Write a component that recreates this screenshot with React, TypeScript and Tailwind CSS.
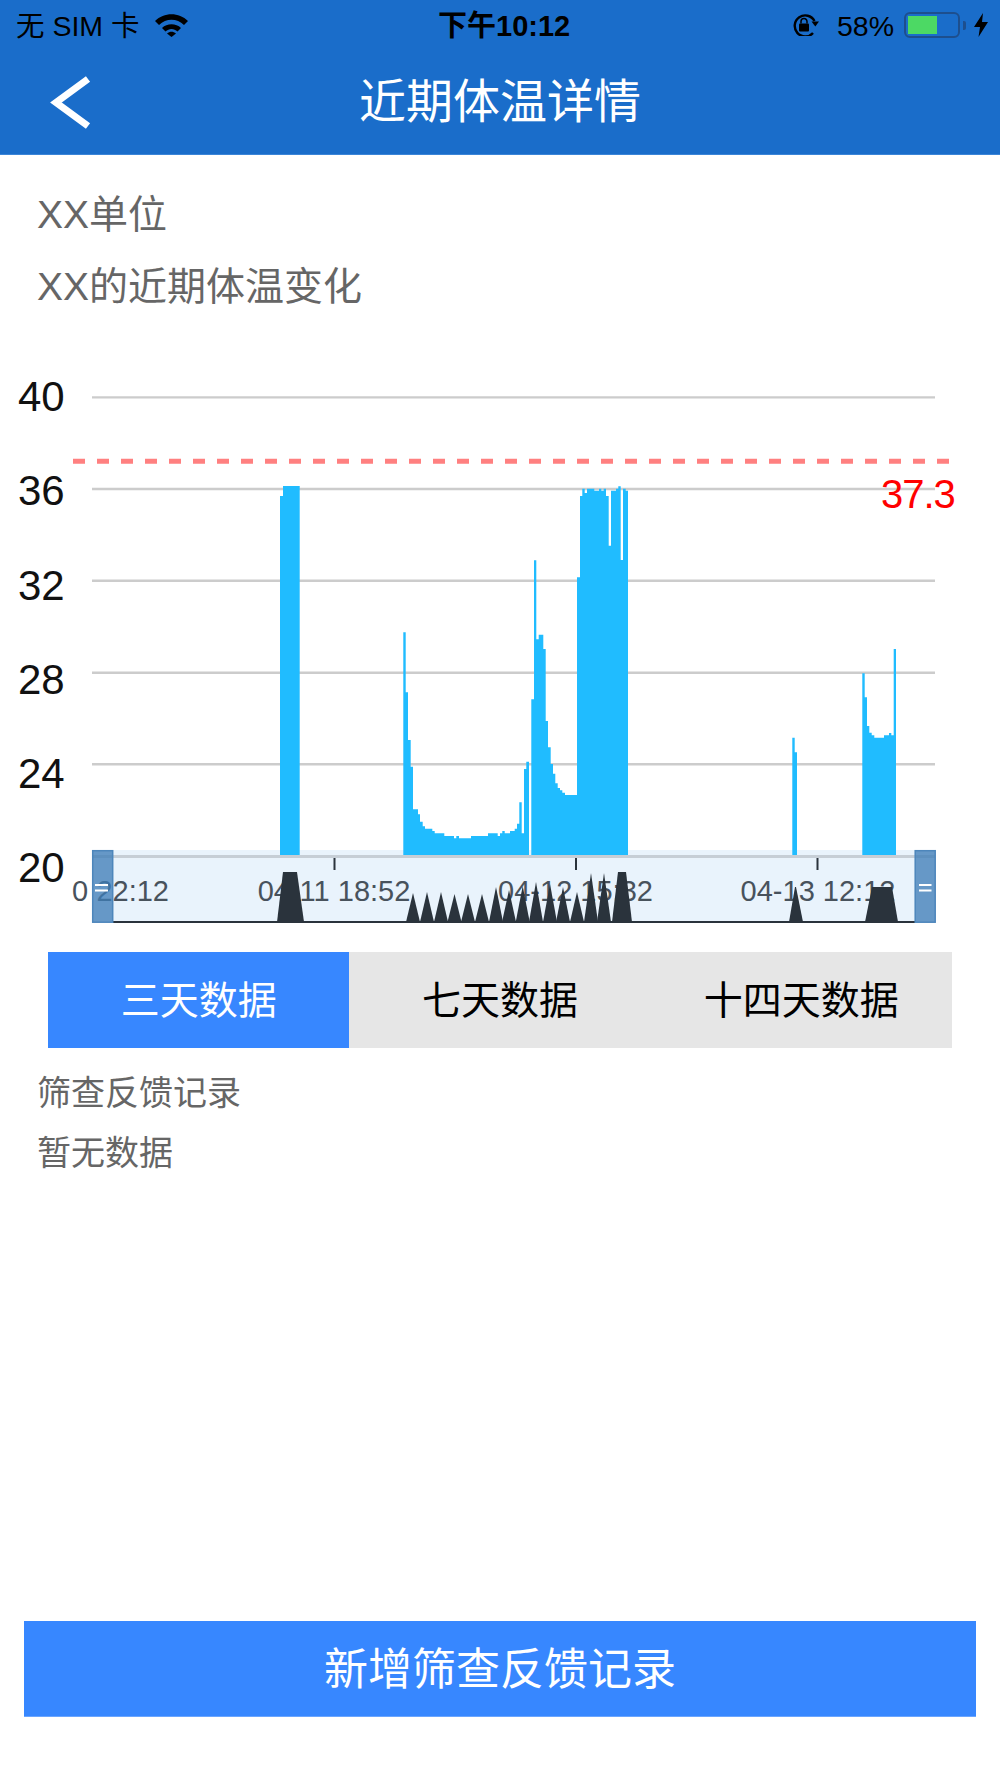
const sans = '"Liberation Sans", "Noto Sans CJK SC", sans-serif';

// bar outlines as [x, top] steps, last entry only closes the run
const BARS: number[][][] = [
  [[280, 496], [283, 486], [299.7, 0]],
  // first hump
  [[403.3, 632.3], [405.7, 692.3], [408, 740], [410.7, 766.7], [413, 809.3], [418, 814.3], [420, 821.7], [422.7, 826.3], [425, 828.7], [432.3, 831], [434.7, 833.3], [444.3, 836], [454, 838.3], [456.3, 836], [459, 838.3], [471, 836], [488, 833.3], [497.7, 836], [500, 833.3], [502.3, 831], [504.7, 833.3], [510, 831], [514.7, 828.7], [517, 823.7], [519.3, 802.3], [521.7, 833.3], [524, 769], [526.3, 761.7], [529, 0]],
  // second hump and the tall block
  [[531.3, 699.3], [534, 560.3], [536.3, 639.3], [538.7, 634.7], [543.3, 649], [545.7, 721], [548, 747.3], [550.7, 764], [553, 773.7], [555.3, 783.3], [557.7, 788], [560, 790.3], [562.3, 792.7], [565, 795], [577, 577.3], [580, 496], [582.3, 488.7], [584.7, 493], [587, 488.7], [594.3, 490.7], [599, 488.7], [601.3, 490.7], [603.7, 488.7], [606, 496], [608.7, 545.7], [611, 490.7], [616, 488.7], [618.3, 486.3], [620.7, 560], [623, 488.7], [625.7, 490.7], [628, 0]],
  [[792.3, 737.7], [794.7, 752.3], [797, 0]],
  [[862.3, 673.3], [864.7, 697.3], [867, 726], [869.3, 732.7], [871.7, 735.3], [874.3, 737.7], [884, 735.3], [889, 733], [891.3, 735.3], [893.7, 649], [896, 0]],
];

const GRID = [397.4, 489, 580.7, 672.7, 764.3];
const YLABELS: [string, number][] = [["40", 411], ["36", 505], ["32", 599.5], ["28", 693.5], ["24", 787.5], ["20", 882]];
const TICKS = [334.5, 576, 817.5];

// mini chart peaks under the slider: [centre, apex y]
const PEAKS: [number, number][] = [[413, 893], [427, 892], [441, 892], [454.5, 894], [468, 894], [482, 894], [496, 887], [509, 890], [522.7, 886], [536, 882], [550, 884], [563, 887], [577, 892], [591, 873], [604, 873]];

function barPath(steps: number[][]) {
  let d = `M${steps[0][0]} 855`;
  steps.slice(0, -1).forEach(([, top], j) => {
    d += ` V${top} H${steps[j + 1][0]}`;
  });
  return `${d} V855 Z`;
}

function TempChart() {
  return (
    <svg viewBox="0 380 1000 550" className="block w-[1000px] h-[550px] mt-[57px]">
      {GRID.map((y) => (
        <line key={y} x1={92} x2={935} y1={y} y2={y} stroke="#cccccc" strokeWidth={2.4} />
      ))}

      {/* slider background sits under the bars */}
      <rect x={92} y={850} width={843} height={72} fill="#e9f3fc" />

      {BARS.map((steps, i) => (
        <path key={i} d={barPath(steps)} fill="#20bcff" />
      ))}

      <rect x={92} y={855} width={843} height={3} fill="#c6ced6" />

      {TICKS.map((x) => (
        <rect key={x} x={x - 1} y={858} width={2} height={12} fill="#2a333c" />
      ))}

      {YLABELS.map(([t, y]) => (
        <text key={t} x={18} y={y} fontSize={42} fill="#111111" style={{ fontFamily: sans }}>{t}</text>
      ))}

      <g fontSize={29} fill="#48525c" style={{ fontFamily: sans }}>
        <text x={72} y={900.7}>0</text>
        <text x={169} y={900.7} textAnchor="end">22:12</text>
        <text x={334} y={900.7} textAnchor="middle">04-11 18:52</text>
        <text x={575.5} y={900.7} textAnchor="middle">04-12 15:32</text>
        <text x={818} y={900.7} textAnchor="middle">04-13 12:12</text>
      </g>

      {/* mini series */}
      <g fill="#2a333c">
        <rect x={113} y={921} width={802} height={2} />
        <path d="M277 922 L283 872 H297 L304 922 Z" />
        {PEAKS.map(([x, y]) => (
          <path key={x} d={`M${x - 7} 922 L${x} ${y} L${x + 7} 922 Z`} />
        ))}
        <path d="M612 922 L618 872 H626 L632 922 Z" />
        <path d="M789 922 L795 887 L796 887 L803 922 Z" />
        <path d="M865 922 L872 887 H892 L898 922 Z" />
      </g>

      {/* slider handles */}
      <g fill="#3f7db6" fillOpacity={0.77} stroke="#4d86bb" strokeWidth={1.5}>
        <rect x={92.7} y={850.7} width={20} height={71.5} />
        <rect x={915.2} y={850.7} width={20} height={71.5} />
      </g>
      <g fill="#ffffff">
        <rect x={95} y={884} width={13} height={2} />
        <rect x={95} y={889.5} width={13} height={2} />
        <rect x={919} y={884} width={12.5} height={2} />
        <rect x={919} y={889.5} width={12.5} height={2} />
      </g>

      <line x1={73} x2={952} y1={461.3} y2={461.3} stroke="#ff8080" strokeWidth={5} strokeDasharray="12 12" />
      <text x={881} y={508} fontSize={40} letterSpacing={-1} fill="#ff0000" style={{ fontFamily: sans }}>37.3</text>
    </svg>
  );
}

function StatusBar() {
  return (
    <div className="relative flex items-center justify-between h-[50px] pl-[16px] pr-[12px] text-black text-[28.5px]">
      <div className="flex items-center">
        <span className="w-[139px] pt-[2px]">无 SIM 卡</span>
        <svg viewBox="0 0 33 23" className="w-[33px] h-[23px]">
          <path d="M0 7 C9 -2 24 -2 33 7 L29 11 C22 4 11 4 4 11 Z" fill="#000" />
          <path d="M7 14 C12 9 21 9 26 14 L22.5 17.5 C19 14 14 14 10.500 17.500 Z" fill="#000" />
          <path d="M12 19.500 C15 17 18 17 21 19.500 L16.500 23 Z" fill="#000" />
        </svg>
      </div>
      <span className="absolute left-[438px] top-[8px] font-bold text-[29px] leading-[36px]">下午10:12</span>
      <div className="flex items-center">
        <svg viewBox="0 0 26 22" className="w-[26px] h-[22px]">
          <path d="M20 19 A10.500 10.500 0 1 1 21.500 7" fill="none" stroke="#000" strokeWidth={2.4} />
          <path d="M18.500 7.500 L26 7.500 L22.300 12.500 Z" fill="#000" />
          <rect x={6} y={9.500} width={10} height={8} rx={1} fill="#000" />
          <path d="M8 9.500 V7.500 A3 3 0 0 1 14 7.500 V9.500" fill="none" stroke="#000" strokeWidth={1.500} />
        </svg>
        <span className="ml-[18px] w-[67px] pt-[2px]">58%</span>
        <div className="relative w-[56px] h-[26px] rounded-[6px] border-[2px] border-[#1d4f8e] p-[2px]">
          <div className="w-[29px] h-[18px] bg-[#4cd964]" />
        </div>
        <div className="ml-[3px] w-[3px] h-[9px] bg-[#1d4f8e] rounded-r-[2px]" />
        <svg viewBox="0 0 14 24" className="ml-[8px] w-[14px] h-[24px]">
          <path d="M9 0 L0 14 H6 L4.500 24 L14 9 H8 Z" fill="#000" />
        </svg>
      </div>
    </div>
  );
}

export default function App() {
  const tabs = ["三天数据", "七天数据", "十四天数据"];

  return (
    <div className="flex flex-col h-[1778px] w-[1000px] bg-white" style={{ fontFamily: sans }}>
      {/* Header */}
      <div className="h-[155px] bg-[#1a6dca] border-b border-[#3b85d8]">
        <StatusBar />
        <div className="grid grid-cols-[1fr_auto_1fr] items-center h-[104px] pl-[50px]">
          <svg viewBox="0 0 41 53" className="w-[41px] h-[53px]">
            <path d="M38 3 L6 26.500 L38 50" fill="none" stroke="#ffffff" strokeWidth={7} />
          </svg>
          <h1 className="text-[47px] text-white font-normal -ml-[50px]">近期体温详情</h1>
          <div />
        </div>
      </div>

      {/* Person info */}
      <div className="pt-[24px] pl-[37px] text-[39px] leading-[72px] text-[#666666]">
        <p>XX单位</p>
        <p>XX的近期体温变化</p>
      </div>

      <TempChart />

      {/* Range tabs */}
      <div className="grid grid-cols-3 mx-[48px] mt-[22px] h-[96px] bg-[#e6e6e6]">
        {tabs.map((tab, index) => (
          <div
            key={tab}
            className={index === 0 ? "flex items-center justify-center pt-[2px] bg-[#3787ff] text-white text-[39px]" : "flex items-center justify-center pt-[2px] text-black text-[39px]"}
          >
            {tab}
          </div>
        ))}
      </div>

      {/* Feedback records */}
      <div className="mt-[15px] pl-[37px] text-[34px] leading-[60px] text-[#666666]">
        <p>筛查反馈记录</p>
        <p>暂无数据</p>
      </div>

      <div className="flex-1" />

      <button className="mx-[24px] mb-[61px] h-[96px] pt-[2px] bg-[#3787ff] border-b border-[#6aa5ff] text-white text-[44px]">新增筛查反馈记录</button>
    </div>
  );
}
